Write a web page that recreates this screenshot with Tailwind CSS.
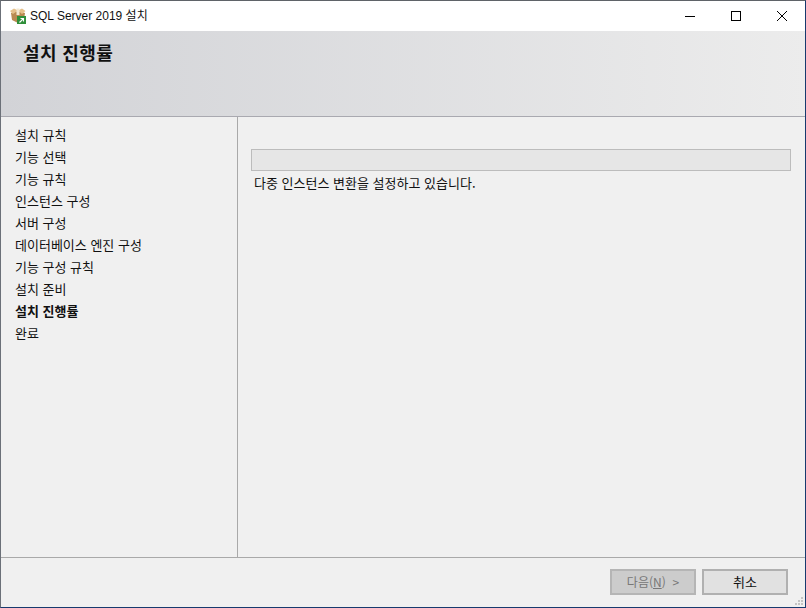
<!DOCTYPE html>
<html lang="ko">
<head>
    <meta charset="UTF-8">
    <title>SQL Server 2019 설치</title>
    <script src="https://cdn.jsdelivr.net/npm/@tailwindcss/browser@4"></script>
</head>
<body class="w-[806px] h-[608px] overflow-hidden bg-[#f0f0f0]">
    <div class="relative flex flex-col w-[806px] h-[608px] border-t border-l border-t-[#5f6368] border-l-[#6b7078] border-r border-b border-r-[#173a6e] border-b-[#173a6e] text-[#111] [font-family:'Noto_Sans_CJK_KR','Liberation_Sans',sans-serif]">
        <!-- title bar -->
        <div class="flex items-center h-[30px] bg-white shrink-0">
            <svg class="ml-[9px] w-[16px] h-[16px]" viewBox="0 0 16 16">
                <path d="M1 5 L8 3 L15 5 L14 12 L8 15 L2 12 Z" fill="#b98a52"/>
                <path d="M0 3 L4 0.5 L8 2.5 L3 6 Z M8 2.5 L12 0.5 L15.5 3 L12 6 Z" fill="#e5c08a"/>
                <path d="M6.5 0.5 h3 v6.5 h-3 Z" fill="#f3e8d2"/>
                <rect x="7" y="8" width="9" height="8" fill="#2f8f3a"/>
                <path d="M9.5 14.5 L13 11 M10.5 10.5 H13.5 V13.5" stroke="#fff" stroke-width="1.1" fill="none"/>
            </svg>
            <span class="ml-[4px] text-[12px] leading-[30px] font-['Liberation_Sans','Noto_Sans_CJK_KR',sans-serif]">SQL Server 2019 설치</span>
            <div class="ml-auto flex h-[30px]">
                <div class="w-[46px] flex items-center justify-center">
                    <svg class="w-[10px] h-[10px]" viewBox="0 0 10 10"><path d="M0 5.5 H10" stroke="#000" stroke-width="1"/></svg>
                </div>
                <div class="w-[46px] flex items-center justify-center">
                    <svg class="w-[10px] h-[10px]" viewBox="0 0 10 10"><rect x="0.5" y="0.5" width="9" height="9" fill="none" stroke="#000" stroke-width="1"/></svg>
                </div>
                <div class="w-[46px] flex items-center justify-center">
                    <svg class="w-[10px] h-[10px]" viewBox="0 0 10 10"><path d="M0 0 L10 10 M10 0 L0 10" stroke="#000" stroke-width="1"/></svg>
                </div>
            </div>
        </div>
        <!-- header -->
        <div class="h-[86px] shrink-0 pl-[22px] pt-[8px] border-b border-[#a9a9b0] bg-gradient-to-r from-[#d2d3d7] to-[#ececec]">
            <h1 class="text-[18px] leading-[26px] font-semibold tracking-[0.4px]">설치 진행률</h1>
        </div>
        <!-- body -->
        <div class="flex flex-1 min-h-0">
            <ul class="w-[237px] shrink-0 border-r border-[#a9a9a9] pt-[7px] pl-[14px] text-[13px] leading-[22px]">
                <li>설치 규칙</li>
                <li>기능 선택</li>
                <li>기능 규칙</li>
                <li>인스턴스 구성</li>
                <li>서버 구성</li>
                <li>데이터베이스 엔진 구성</li>
                <li>기능 구성 규칙</li>
                <li>설치 준비</li>
                <li class="font-bold">설치 진행률</li>
                <li>완료</li>
            </ul>
            <div class="flex-1 pl-[13px] pr-[14px] pt-[32px]">
                <div class="h-[22px] bg-[#e6e6e6] border border-[#bcbcbc]"></div>
                <p class="mt-[2px] ml-[3px] text-[13px] leading-[20px]">다중 인스턴스 변환을 설정하고 있습니다.</p>
            </div>
        </div>
        <!-- footer -->
        <div class="relative flex justify-end gap-[6px] h-[50px] shrink-0 pt-[11px] pr-[17px] border-t border-[#a9a9a9]">
            <button class="w-[86px] h-[26px] bg-[#cccccc] border-2 border-[#b5b5b5] text-[12px] leading-[20px] text-[#777]">다음(<span class="underline">N</span>) &nbsp;&gt;</button>
            <button class="w-[86px] h-[26px] bg-[#e1e1e1] border-2 border-[#b0b0b0] text-[13px] leading-[20px]">취소</button>
            <svg class="absolute right-[1px] bottom-[1px] w-[10px] h-[10px]" viewBox="0 0 10 10" fill="#c4c4c4">
                <rect x="7" y="1" width="2" height="2"/><rect x="4" y="4" width="2" height="2"/><rect x="7" y="4" width="2" height="2"/>
                <rect x="1" y="7" width="2" height="2"/><rect x="4" y="7" width="2" height="2"/><rect x="7" y="7" width="2" height="2"/>
            </svg>
        </div>
    </div>
</body>
</html>
